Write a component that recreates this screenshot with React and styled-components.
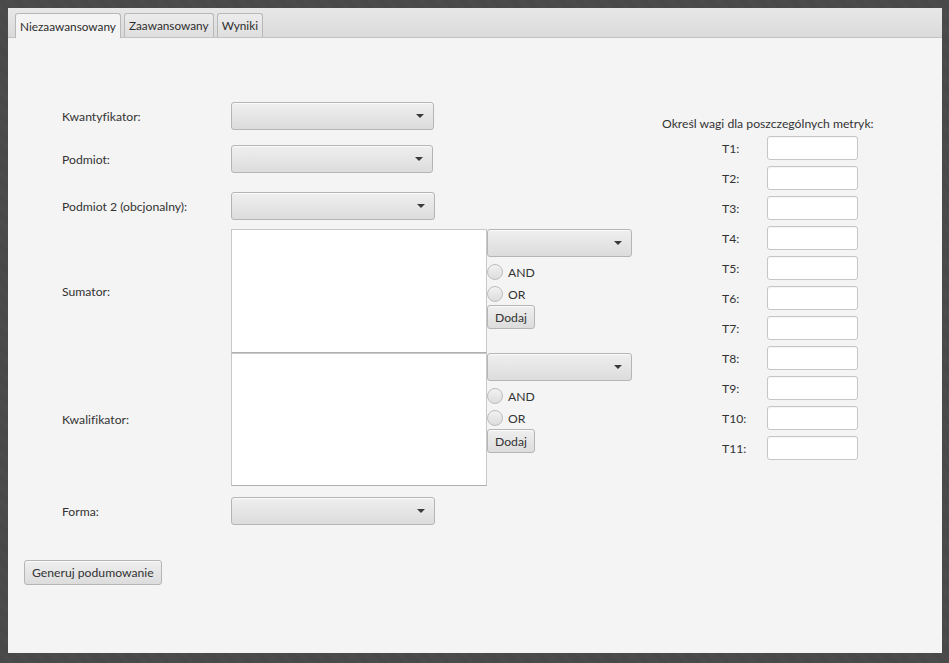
import React from 'react';
import styled, { createGlobalStyle } from 'styled-components';

const GlobalStyle = createGlobalStyle`
  html, body {
    margin: 0;
    padding: 0;
    background: #4a4a4a;
  }
  * {
    box-sizing: border-box;
  }
`;

const Frame = styled.div`
  width: 949px;
  height: 663px;
  padding: 8px 7px 10px 8px;
  background-color: #4a4a4a;
  background-image: repeating-linear-gradient(45deg, #474747 0 1px, #4d4d4d 1px 2px);
  font-family: Lato, 'Open Sans', sans-serif;
  font-size: 12.2px;
  font-variant-ligatures: none;
  color: #333333;
`;

const Window = styled.div`
  width: 100%;
  height: 100%;
  display: flex;
  flex-direction: column;
  background: #f4f4f4;
`;

const TabHeader = styled.div`
  height: 30px;
  display: flex;
  align-items: flex-end;
  gap: 3px;
  padding-left: 7px;
  background: linear-gradient(#e8e8e8, #dadada);
  border-bottom: 1px solid #c2c2c2;
`;

const Tab = styled.div`
  height: ${p => (p.$active ? '25px' : '24px')};
  margin-bottom: ${p => (p.$active ? '-1px' : '0')};
  display: flex;
  align-items: center;
  padding: 0 4px;
  font-size: 11.8px;
  border: 1px solid #b8b8b8;
  border-bottom: none;
  border-radius: 3px 3px 0 0;
  background: ${p => (p.$active ? '#f4f4f4' : 'linear-gradient(#ececec, #dedede)')};
  color: #2e2e2e;
  white-space: nowrap;
`;

const Content = styled.div`
  display: flex;
  padding: 64px 0 0 16px;
`;

const Form = styled.div`
  width: 608px;
  display: flex;
  flex-direction: column;
`;

const Row = styled.div`
  display: flex;
  align-items: center;
  margin-top: ${p => p.$top || 0}px;
`;

const Label = styled.div`
  width: 207px;
  padding-left: 38px;
  white-space: nowrap;
`;

const ComboBox = styled.div`
  width: ${p => p.$width || 203}px;
  height: 28px;
  display: flex;
  align-items: center;
  justify-content: flex-end;
  padding-right: 9px;
  border: 1px solid #b5b5b5;
  border-radius: 3px;
  background: linear-gradient(#efefef, #dcdcdc);
  box-shadow: inset 0 1px 0 rgba(255, 255, 255, 0.7);
`;

const Arrow = styled.span`
  width: 0;
  height: 0;
  border-left: 4px solid transparent;
  border-right: 4px solid transparent;
  border-top: 4px solid #3a3a3a;
`;

const ListBox = styled.div`
  width: 256px;
  height: ${p => p.$height}px;
  background: #ffffff;
  border: 1px solid #c8c8c8;
  border-bottom-color: #b0b0b0;
`;

const Side = styled.div`
  width: 145px;
  align-self: flex-start;
  display: flex;
  flex-direction: column;
`;

const RadioRow = styled.label`
  height: 22px;
  display: flex;
  align-items: center;
  gap: 5px;
  margin-top: ${p => p.$top || 0}px;
`;

const RadioDot = styled.span`
  width: 16px;
  height: 16px;
  border-radius: 50%;
  border: 1px solid #bdbdbd;
  background: linear-gradient(#f2f2f2, #dddddd);
`;

const Button = styled.button`
  height: ${p => p.$height || 24}px;
  padding: 0 7px;
  align-self: flex-start;
  font-family: inherit;
  font-size: inherit;
  font-variant-ligatures: none;
  color: #333;
  border: 1px solid #b5b5b5;
  border-radius: 3px;
  background: linear-gradient(#efefef, #dcdcdc);
  box-shadow: inset 0 1px 0 rgba(255, 255, 255, 0.7);
  margin-top: ${p => p.$top || 0}px;
`;

const Weights = styled.div`
  margin: 14px 0 0 30px;
  display: flex;
  flex-direction: column;
`;

const WeightsTitle = styled.div`
  height: 16px;
  line-height: 16px;
  white-space: nowrap;
  margin-bottom: 4px;
`;

const WeightList = styled.div`
  display: flex;
  flex-direction: column;
  gap: 6px;
  padding-left: 60px;
`;

const WeightRow = styled.div`
  display: flex;
  align-items: center;
`;

const WeightLabel = styled.div`
  width: 45px;
`;

const TextField = styled.div`
  width: 91px;
  height: 24px;
  background: #ffffff;
  border: 1px solid #c6c6c6;
  border-radius: 3px;
  box-shadow: inset 0 1px 1px rgba(0, 0, 0, 0.04);
`;

const Combo = ({ width }) => (
  <ComboBox $width={width}>
    <Arrow />
  </ComboBox>
);

const Joiner = () => (
  <Side>
    <Combo width={145} />
    <RadioRow $top={4}>
      <RadioDot />
      AND
    </RadioRow>
    <RadioRow>
      <RadioDot />
      OR
    </RadioRow>
    <Button>Dodaj</Button>
  </Side>
);

const metrics = ['T1', 'T2', 'T3', 'T4', 'T5', 'T6', 'T7', 'T8', 'T9', 'T10', 'T11'];

const App = () => {
  return (
    <Frame>
      <GlobalStyle />
      <Window>
        <TabHeader>
          <Tab $active>Niezaawansowany</Tab>
          <Tab>Zaawansowany</Tab>
          <Tab>Wyniki</Tab>
        </TabHeader>
        <Content>
          <Form>
            <Row>
              <Label>Kwantyfikator:</Label>
              <Combo width={203} />
            </Row>
            <Row $top={15}>
              <Label>Podmiot:</Label>
              <Combo width={202} />
            </Row>
            <Row $top={19}>
              <Label>Podmiot 2 (obcjonalny):</Label>
              <Combo width={204} />
            </Row>
            <Row $top={9}>
              <Label>Sumator:</Label>
              <ListBox $height={124} />
              <Joiner />
            </Row>
            <Row>
              <Label>Kwalifikator:</Label>
              <ListBox $height={133} />
              <Joiner />
            </Row>
            <Row $top={11}>
              <Label>Forma:</Label>
              <Combo width={204} />
            </Row>
            <Button $top={35} $height={25}>Generuj podumowanie</Button>
          </Form>
          <Weights>
            <WeightsTitle>Określ wagi dla poszczególnych metryk:</WeightsTitle>
            <WeightList>
              {metrics.map(m => (
                <WeightRow key={m}>
                  <WeightLabel>{m}:</WeightLabel>
                  <TextField />
                </WeightRow>
              ))}
            </WeightList>
          </Weights>
        </Content>
      </Window>
    </Frame>
  );
};

export default App;
